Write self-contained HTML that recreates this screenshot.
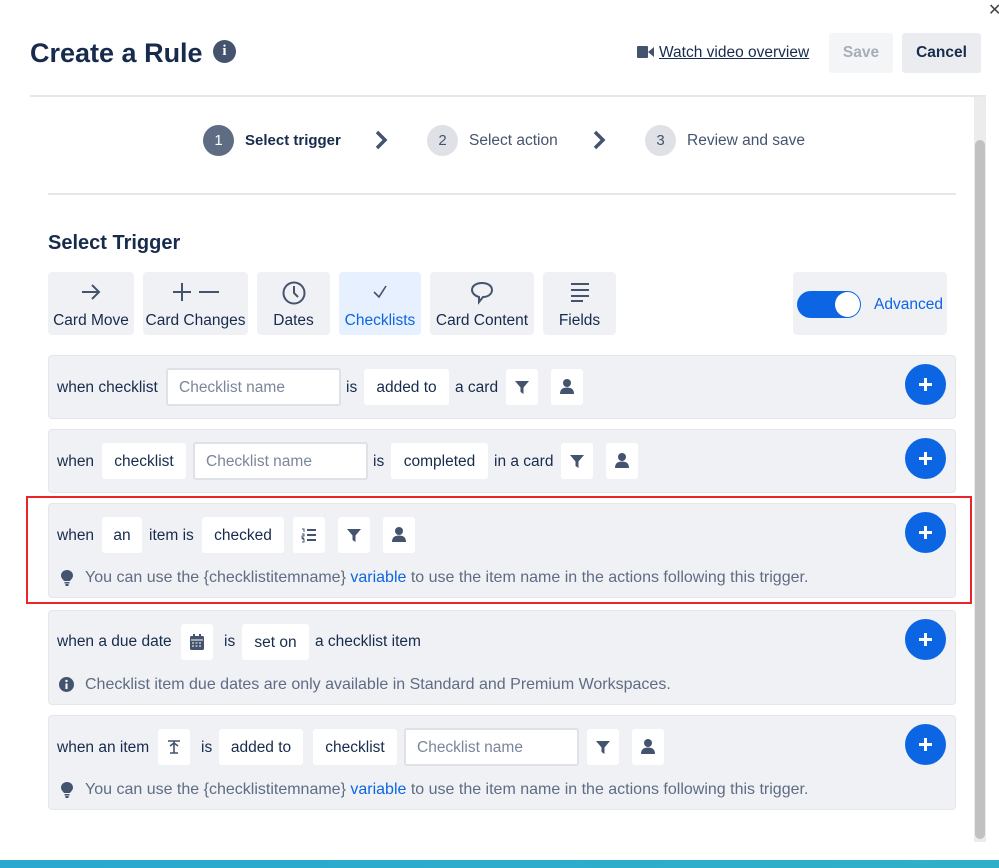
<!DOCTYPE html>
<html><head><meta charset="utf-8"><style>
*{box-sizing:border-box;margin:0;padding:0}
body{width:999px;height:868px;position:relative;overflow:hidden;background:#fff;font-family:"Liberation Sans",sans-serif;color:#172b4d}
.a{position:absolute}
.t{position:absolute;font-size:15.5px;line-height:18px;white-space:nowrap}
.chip{position:absolute;background:#fff;border-radius:3px;height:36px;font-size:15.5px;line-height:37px;text-align:center;white-space:nowrap;color:#172b4d}
.inp{position:absolute;background:#fff;border:2px solid #dfe1e6;border-radius:3px;height:38px;font-size:15.5px;line-height:35px;padding-left:11px;color:#7a869a}
.row{position:absolute;left:48px;width:908px;background:#f0f1f4;border:1px solid #e4e6ea;border-radius:4px}
.plus{position:absolute;left:905px;width:41px;height:41px;border-radius:50%;background:#0c66e4}
.plus:before{content:"";position:absolute;left:14px;top:19px;width:13px;height:3px;background:#fff}
.plus:after{content:"";position:absolute;left:19px;top:14px;width:3px;height:13px;background:#fff}
.tab{position:absolute;top:272px;height:63px;background:#f0f1f4;border-radius:4px;font-size:15.5px;color:#172b4d;text-align:center}
.tab span{position:absolute;left:-5px;right:-5px;top:40px;white-space:nowrap}
.tab svg{position:absolute;left:50%;top:8px;transform:translateX(-50%)}
.hint{position:absolute;font-size:16px;color:#5e6c84;white-space:nowrap}
.hint b{font-weight:normal;color:#0c66e4}
.circ{position:absolute;width:31px;height:31px;border-radius:50%;text-align:center;line-height:31px;font-size:15px}
</style></head><body>
<div class="a" style="left:988px;top:0;font-size:16px;color:#444">&#x2715;</div>
<div class="a" style="left:30px;top:36px;font-size:27px;font-weight:bold;line-height:34px">Create a Rule</div>
<div class="a" style="left:213px;top:40px;width:23px;height:23px;border-radius:50%;background:#44546f;color:#fff;font-weight:bold;font-size:15px;text-align:center;line-height:23px;font-family:'Liberation Serif',serif">i</div>
<svg class="a" style="left:637px;top:46px" width="17" height="12"><rect x="0" y="0" width="11" height="12" rx="1" fill="#44546f"/><path d="M11 6 L17 1 V11 Z" fill="#44546f"/></svg>
<div class="t" style="left:659px;top:44px;text-decoration:underline;color:#172b4d">Watch video overview</div>
<div class="a" style="left:829px;top:33px;width:64px;height:40px;background:#f4f5f7;border-radius:3px;color:#a5adba;font-weight:bold;font-size:15.5px;text-align:center;line-height:40px">Save</div>
<div class="a" style="left:902px;top:33px;width:79px;height:40px;background:#ebecf0;border-radius:3px;color:#172b4d;font-weight:bold;font-size:15.5px;text-align:center;line-height:40px">Cancel</div>
<div class="a" style="left:30px;top:95px;width:956px;height:2px;background:#e4e6ea"></div>
<div class="a" style="left:974px;top:97px;width:12px;height:745px;background:#ececec"></div>
<div class="a" style="left:975px;top:140px;width:10px;height:699px;background:#c1c1c1;border-radius:5px"></div>

<div class="circ" style="left:203px;top:125px;background:#5e6c84;color:#fff">1</div>
<div class="t" style="left:245px;top:132px;font-weight:bold;font-size:15px">Select trigger</div>
<svg class="a" style="left:374px;top:130px" width="14" height="20"><path d="M3 2 L11 10 L3 18" stroke="#44546f" stroke-width="3.5" fill="none"/></svg>
<div class="circ" style="left:427px;top:125px;background:#dfe1e6;color:#44546f">2</div>
<div class="t" style="left:469px;top:132px;color:#44546f">Select action</div>
<svg class="a" style="left:592px;top:130px" width="14" height="20"><path d="M3 2 L11 10 L3 18" stroke="#44546f" stroke-width="3.5" fill="none"/></svg>
<div class="circ" style="left:645px;top:125px;background:#dfe1e6;color:#44546f">3</div>
<div class="t" style="left:687px;top:132px;color:#44546f">Review and save</div>
<div class="a" style="left:48px;top:193px;width:908px;height:2px;background:#e4e6ea"></div>

<div class="a" style="left:48px;top:231px;font-size:20px;font-weight:bold;line-height:24px">Select Trigger</div>
<div class="tab" style="left:48px;width:86px"><svg width="24" height="24"><path d="M3 12 H20 M13 5 L20 12 L13 19" stroke="#44546f" stroke-width="2" fill="none"/></svg><span>Card Move</span></div>
<div class="tab" style="left:143px;width:105px"><svg width="50" height="24"><path d="M2 12 H20 M11 3 V21 M28 12 H48" stroke="#44546f" stroke-width="2" fill="none"/></svg><span>Card Changes</span></div>
<div class="tab" style="left:257px;width:73px"><svg width="26" height="26"><circle cx="13" cy="13" r="10.5" stroke="#44546f" stroke-width="2" fill="none"/><path d="M13 6 V13 L17 17" stroke="#44546f" stroke-width="2" fill="none"/></svg><span>Dates</span></div>
<div class="tab" style="left:339px;width:82px;background:#e6f0fe;color:#0c66e4"><svg width="20" height="24"><path d="M4 12 L9 17 L16 6" stroke="#44546f" stroke-width="1.6" fill="none"/></svg><span>Checklists</span></div>
<div class="tab" style="left:430px;width:104px"><svg width="26" height="26"><path d="M13 3 C19 3 23 6 23 10 C23 14 19 17 14 17 L10 22 L10 17 C6 16 3 13 3 10 C3 6 7 3 13 3 Z" stroke="#44546f" stroke-width="2" fill="none"/></svg><span>Card Content</span></div>
<div class="tab" style="left:543px;width:73px"><svg width="24" height="24"><path d="M3 4 H21 M3 10 H21 M3 16 H21 M3 21 H15" stroke="#44546f" stroke-width="2" fill="none"/></svg><span>Fields</span></div>
<div class="a" style="left:793px;top:272px;width:154px;height:63px;background:#f0f1f4;border-radius:4px"></div>
<div class="a" style="left:797px;top:291px;width:64px;height:27px;background:#0c66e4;border-radius:14px"></div>
<div class="a" style="left:835px;top:292px;width:25px;height:25px;background:#fff;border-radius:50%"></div>
<div class="t" style="left:874px;top:296px;color:#0c66e4">Advanced</div>

<!-- row1 -->
<div class="row" style="top:355px;height:64px"></div>
<div class="t" style="left:57px;top:379px">when checklist</div>
<div class="inp" style="left:166px;top:368px;width:175px">Checklist name</div>
<div class="t" style="left:346px;top:379px">is</div>
<div class="chip" style="left:364px;top:369px;width:85px">added to</div>
<div class="t" style="left:455px;top:379px">a card</div>
<div class="chip" style="left:506px;top:369px;width:32px"></div>
<div class="chip" style="left:551px;top:369px;width:32px"></div>
<div class="plus" style="top:364px"></div>
<!-- row2 -->
<div class="row" style="top:429px;height:64px"></div>
<div class="t" style="left:57px;top:453px">when</div>
<div class="chip" style="left:102px;top:443px;width:84px">checklist</div>
<div class="inp" style="left:193px;top:442px;width:175px">Checklist name</div>
<div class="t" style="left:373px;top:453px">is</div>
<div class="chip" style="left:391px;top:443px;width:97px">completed</div>
<div class="t" style="left:494px;top:453px">in a card</div>
<div class="chip" style="left:561px;top:443px;width:32px"></div>
<div class="chip" style="left:606px;top:443px;width:32px"></div>
<div class="plus" style="top:438px"></div>
<!-- row3 -->
<div class="row" style="top:503px;height:95px"></div>
<div class="a" style="left:26px;top:496px;width:946px;height:108px;border:2px solid #e8252a"></div>
<div class="t" style="left:57px;top:527px">when</div>
<div class="chip" style="left:102px;top:517px;width:40px">an</div>
<div class="t" style="left:149px;top:527px">item is</div>
<div class="chip" style="left:202px;top:517px;width:82px">checked</div>
<div class="chip" style="left:293px;top:517px;width:32px"><svg width="16" height="16" style="margin-top:10px"><path d="M6 3 H15 M6 8 H15 M6 13 H15" stroke="#44546f" stroke-width="2"/><path d="M1 2 H3 V5 M1 7 H3 V9 H1 V11 H3 M1 12 H3 V15 H1" stroke="#44546f" stroke-width="1" fill="none"/></svg></div>
<div class="chip" style="left:338px;top:517px;width:32px"></div>
<div class="chip" style="left:383px;top:517px;width:32px"></div>
<div class="plus" style="top:512px"></div>
<div class="hint" style="left:85px;top:569px">You can use the {checklistitemname} <b>variable</b> to use the item name in the actions following this trigger.</div>
<!-- row4 -->
<div class="row" style="top:610px;height:95px"></div>
<div class="t" style="left:57px;top:633px">when a due date</div>
<div class="chip" style="left:181px;top:624px;width:32px"><svg width="14" height="16" style="margin-top:10px"><rect x="0" y="2" width="14" height="14" rx="1.5" fill="#44546f"/><rect x="3" y="0" width="2" height="4" fill="#44546f"/><rect x="9" y="0" width="2" height="4" fill="#44546f"/><path d="M1 6 H13" stroke="#fff"/><path d="M2 9 H12 M2 12 H12" stroke="#fff" stroke-dasharray="2 1.5"/></svg></div>
<div class="t" style="left:224px;top:633px">is</div>
<div class="chip" style="left:242px;top:624px;width:67px">set on</div>
<div class="t" style="left:315px;top:633px">a checklist item</div>
<div class="plus" style="top:619px"></div>
<svg class="a" style="left:59px;top:677px" width="15" height="15"><circle cx="7.5" cy="7.5" r="7.5" fill="#44546f"/><rect x="6.5" y="6.5" width="2" height="5.5" fill="#fff"/><circle cx="7.5" cy="4" r="1.2" fill="#fff"/></svg>
<div class="hint" style="left:85px;top:676px">Checklist item due dates are only available in Standard and Premium Workspaces.</div>
<!-- row5 -->
<div class="row" style="top:715px;height:95px"></div>
<div class="t" style="left:57px;top:739px">when an item</div>
<div class="chip" style="left:158px;top:729px;width:32px"><svg width="14" height="14" style="margin-top:11px"><path d="M1 1 H13 M7 1 V13 M3 6 L7 3 L11 6 M3 13 H11" stroke="#44546f" stroke-width="1.6" fill="none"/></svg></div>
<div class="t" style="left:201px;top:739px">is</div>
<div class="chip" style="left:219px;top:729px;width:84px">added to</div>
<div class="chip" style="left:313px;top:729px;width:84px">checklist</div>
<div class="inp" style="left:404px;top:728px;width:175px">Checklist name</div>
<div class="chip" style="left:587px;top:729px;width:32px"></div>
<div class="chip" style="left:632px;top:729px;width:32px"></div>
<div class="plus" style="top:724px"></div>
<div class="hint" style="left:85px;top:781px">You can use the {checklistitemname} <b>variable</b> to use the item name in the actions following this trigger.</div>

<svg width="0" height="0" style="position:absolute"><defs>
<symbol id="f" viewBox="0 0 16 16"><path d="M1 2 H15 L9.5 8.5 V15 L6.5 13 V8.5 Z" fill="#44546f"/></symbol>
<symbol id="u" viewBox="0 0 16 16"><circle cx="8" cy="5" r="4" fill="#44546f"/><path d="M1 16 C1 11 4 9.5 8 9.5 C12 9.5 15 11 15 16 Z" fill="#44546f"/></symbol>
<symbol id="bulb" viewBox="0 0 12 16"><path d="M6 0 C9.5 0 12 2.5 12 5.5 C12 8 10 9.5 9 11 H3 C2 9.5 0 8 0 5.5 C0 2.5 2.5 0 6 0 Z" fill="#44546f"/><rect x="3.5" y="12" width="5" height="1.5" fill="#44546f"/><rect x="4.2" y="14" width="3.6" height="2" rx="1" fill="#44546f"/></symbol>
</defs></svg>
<svg class="a" style="left:514px;top:379px" width="16" height="16"><use href="#f"/></svg>
<svg class="a" style="left:559px;top:378px" width="16" height="16"><use href="#u"/></svg>
<svg class="a" style="left:569px;top:453px" width="16" height="16"><use href="#f"/></svg>
<svg class="a" style="left:614px;top:452px" width="16" height="16"><use href="#u"/></svg>
<svg class="a" style="left:346px;top:527px" width="16" height="16"><use href="#f"/></svg>
<svg class="a" style="left:391px;top:526px" width="16" height="16"><use href="#u"/></svg>
<svg class="a" style="left:595px;top:739px" width="16" height="16"><use href="#f"/></svg>
<svg class="a" style="left:640px;top:738px" width="16" height="16"><use href="#u"/></svg>
<svg class="a" style="left:61px;top:570px" width="12" height="16"><use href="#bulb"/></svg>
<svg class="a" style="left:61px;top:782px" width="12" height="16"><use href="#bulb"/></svg>

<div class="a" style="left:0;top:860px;width:999px;height:8px;background:linear-gradient(90deg,#2aa8d0,#30b0c8)"></div>
</body></html>
